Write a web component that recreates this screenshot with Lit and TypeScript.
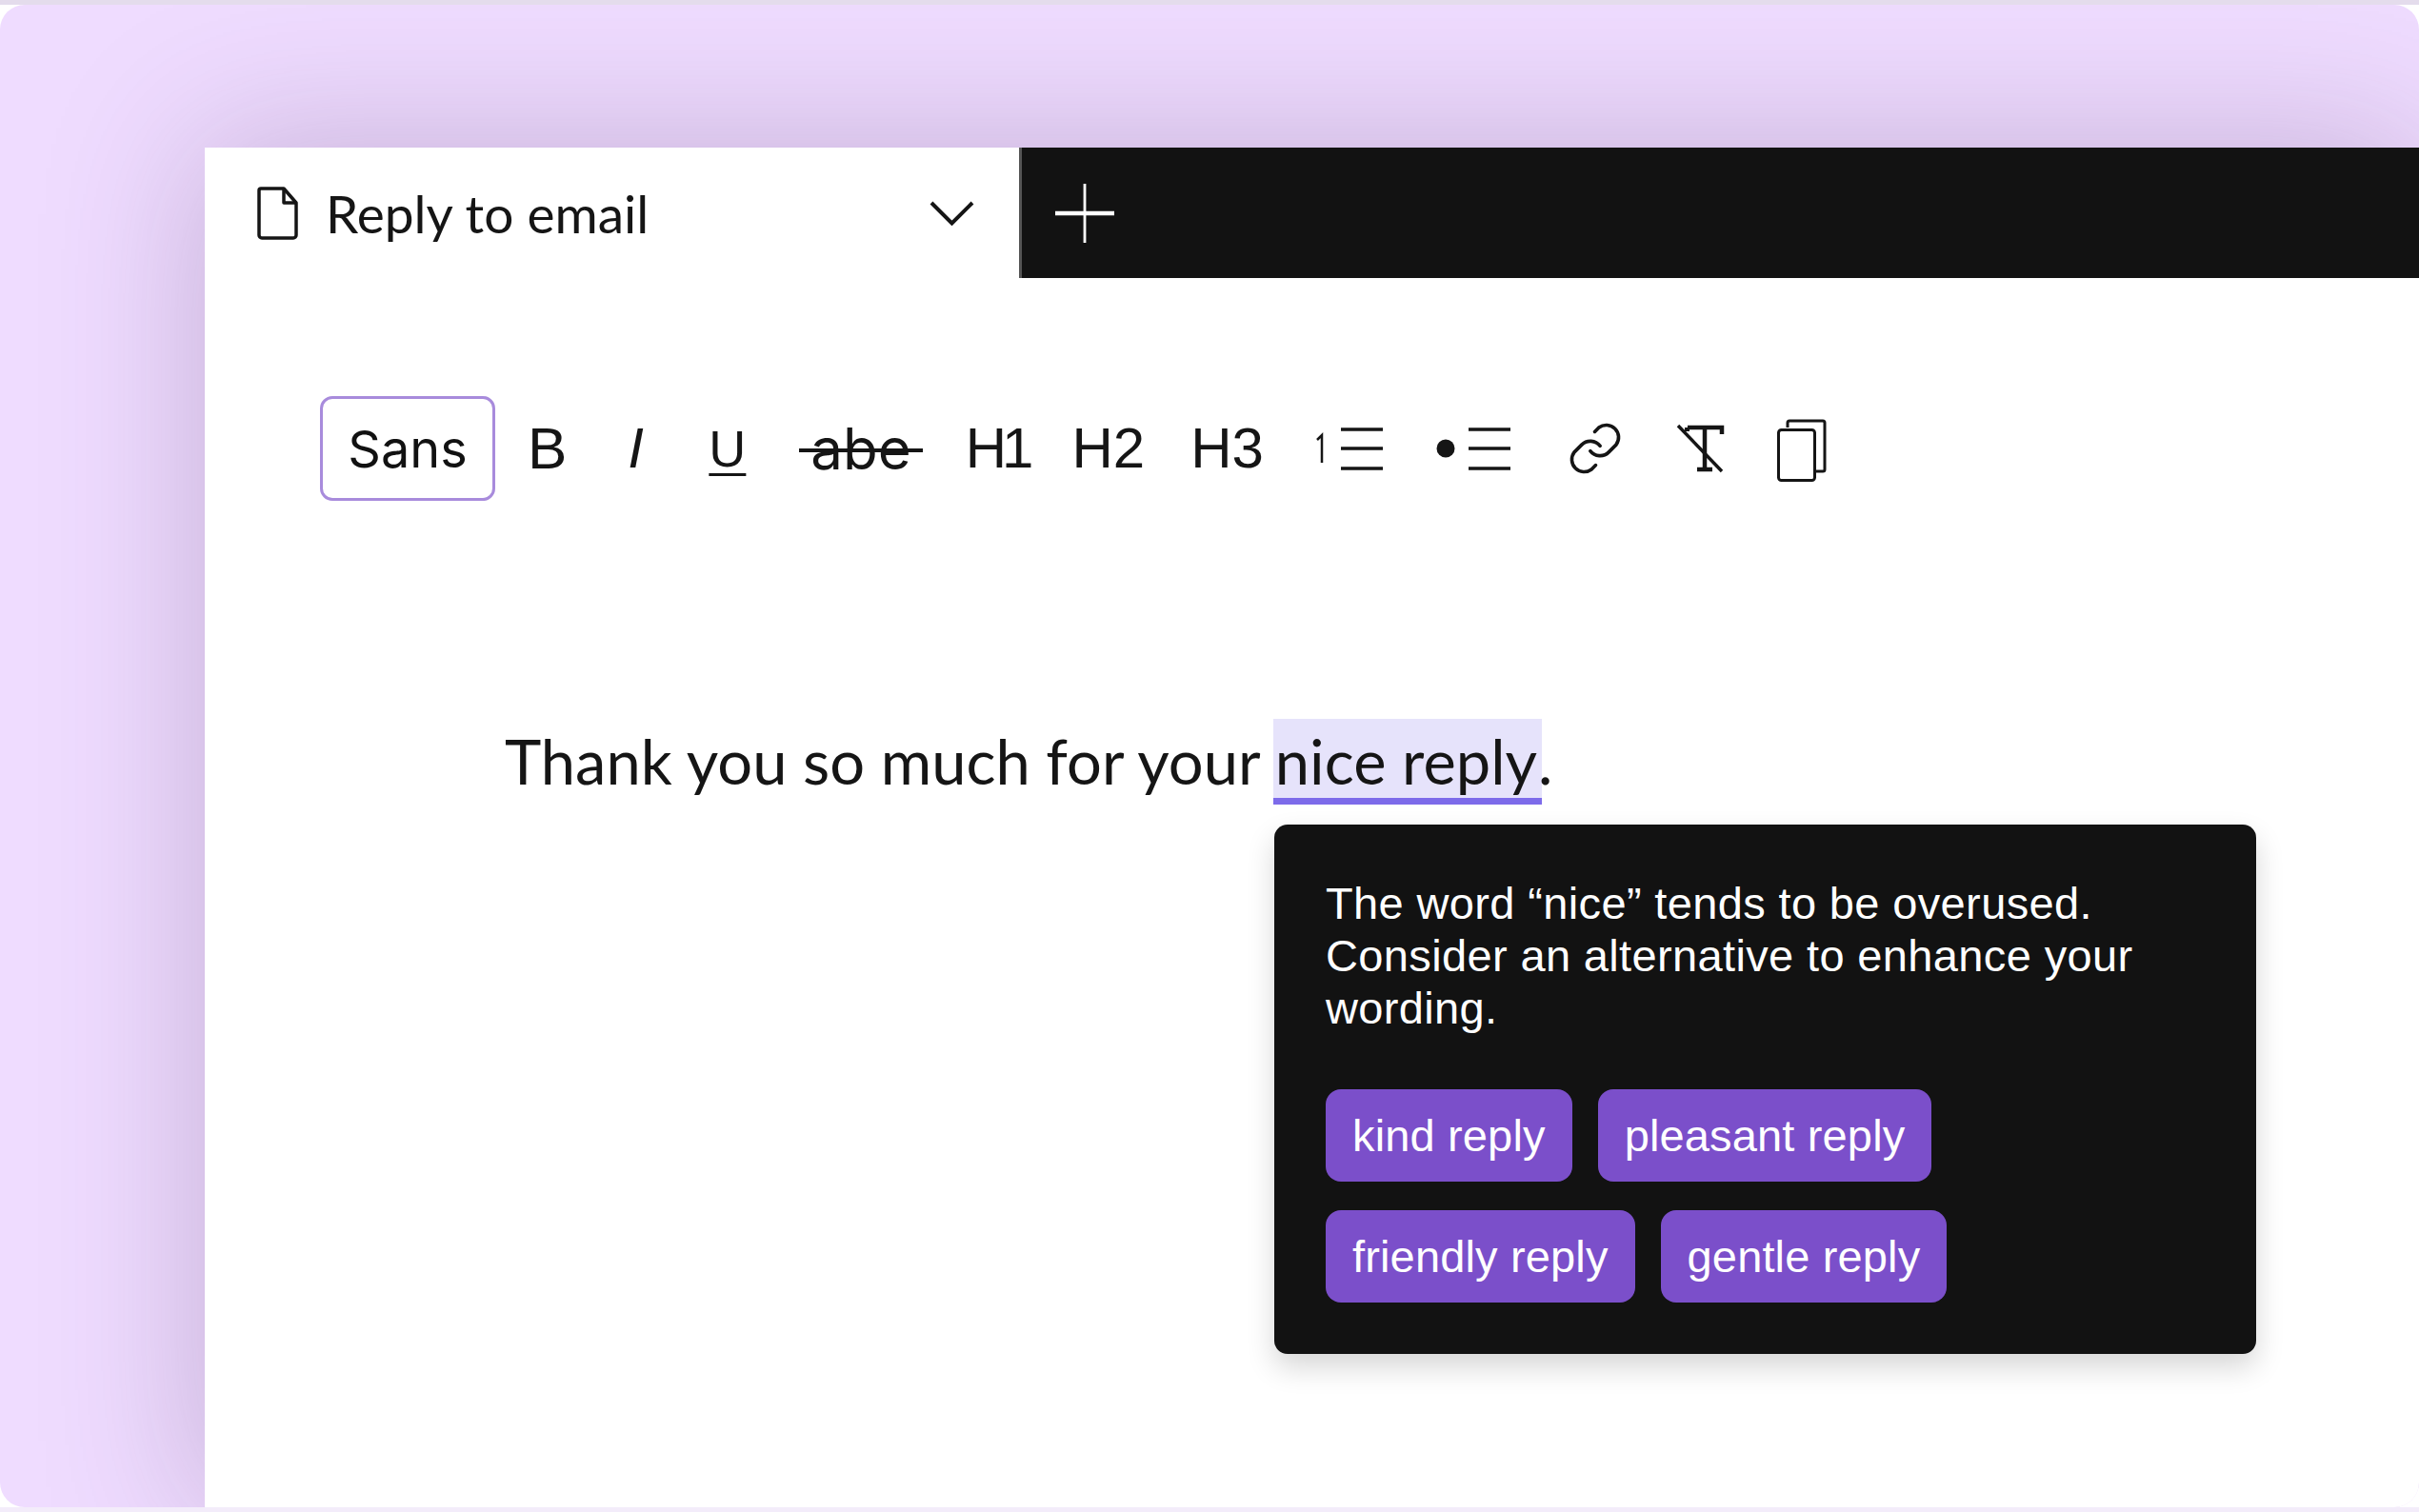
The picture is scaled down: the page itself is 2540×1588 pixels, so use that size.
import { LitElement, html, css } from "lit";
import { customElement } from "lit/decorators.js";

@customElement("app-root")
export class AppRoot extends LitElement {
  static styles = css`
    :host { display: block; width: 2540px; height: 1588px; background: #fff; overflow: hidden; font-family: "Liberation Sans", Arial, sans-serif; color: #111; }
    .strip-top { height: 5px; background: #e4dcec; }
    .strip-bottom { height: 5px; background: #f3ecfa; }
    .card { height: 1578px; box-sizing: border-box; padding: 150px 0 0 215px; background: #efdcff; border-radius: 26px; overflow: hidden; }
    .window { height: 100%; background: #fff; box-shadow: 0 0 150px 4px rgba(80, 50, 100, 0.26); display: flex; flex-direction: column; position: relative; }
    .tabs { height: 137px; flex: none; display: flex; background: #121212; }
    .tab { width: 855px; background: #fff; border-right: 3px solid #555; display: flex; align-items: center; box-sizing: content-box; }
    .doc { width: 44px; height: 56px; margin-left: 55px; flex: none; }
    .tab-title { font-family: Lato, sans-serif; font-size: 55px; margin-left: 28px; color: #151515; flex: 1; }
    .chev { width: 47px; height: 26px; margin-right: 47px; flex: none; }
    .plus { width: 62px; height: 62px; margin: 38px 0 0 35px; flex: none; }
    .toolbar { display: flex; align-items: center; gap: 56px; margin: 124px 0 0 121px; height: 110px; }
    .font { width: 184px; height: 110px; box-sizing: border-box; border: 3px solid #a88bdc; border-radius: 13px; display: flex; align-items: center; justify-content: center; font-family: Inter, sans-serif; font-size: 54px; margin-right: -22px; }
    .t { font-size: 60px; line-height: 60px; color: #151515; font-family: "Liberation Sans", sans-serif; }
    .b { font-size: 62px; margin-right: 8px; }
    .i { font-style: italic; margin-right: 13px; width: 16px; }
    .u { text-decoration: underline; text-underline-offset: 7px; text-decoration-thickness: 3px; font-size: 54px; }
    .s { position: relative; font-family: Inter, sans-serif; padding: 0 12px; margin-right: -11px; }
    .s::after { content: ""; position: absolute; left: 0; right: 0; top: 30px; height: 4px; background: #151515; }
    .h1 { letter-spacing: -5px; margin-right: -11px; }
    .h2 { margin-right: -8px; }
    .h3 { margin-right: -2px; }
    svg.ic { flex: none; display: block; overflow: visible; }
    .link { margin: 0 -2px 0 2px; }
    .copy { margin-top: 3px; }
    .doc-body { margin: 229px 0 0 315px; font-family: Lato, sans-serif; font-size: 65px; line-height: 88px; color: #151515; white-space: nowrap; }
    .mark { display: inline-block; background: #e6e3fb; box-shadow: inset 0 -7px 0 #7d6bea; padding: 0 5px 2px 2px; margin: 0 -4px 0 -2px; }
    .tip { position: absolute; left: 1123px; top: 711px; width: 1031px; height: 556px; box-sizing: border-box; padding: 55px 54px 54px; background: #121212; border-radius: 14px; box-shadow: 0 14px 30px rgba(0, 0, 0, 0.16); color: #fff; }
    .tip p { margin: 0; font-size: 47px; line-height: 55px; letter-spacing: 0.36px; }
    .opts { display: flex; flex-wrap: wrap; gap: 30px 27px; margin-top: 58px; }
    .opt { height: 97px; padding: 0 28px; background: #7b4fca; border-radius: 16px; font-size: 47px; line-height: 97px; letter-spacing: 0.15px; color: #fff; }
  `;

  render() {
    return html`
      <div class="strip-top"></div>
      <div class="card">
        <div class="window">
          <div class="tabs">
            <div class="tab">
              <svg class="doc" viewBox="0 0 44 56" fill="none" stroke="#151515" stroke-width="3.5" stroke-linejoin="round"><path d="M4 2h24l13 15v34a3 3 0 0 1-3 3H5a3 3 0 0 1-3-3V4a2 2 0 0 1 2-2z"/><path d="M28 2v15h13"/></svg>
              <div class="tab-title">Reply to email</div>
              <svg class="chev" viewBox="0 0 47 26" fill="none" stroke="#151515" stroke-width="4"><path d="M2 2l21.500 21.500L45 2"/></svg>
            </div>
            <svg class="plus" viewBox="0 0 66 66" stroke="#fff" fill="none"><path d="M0 33h66" stroke-width="5"/><path d="M33 0v66" stroke-width="3"/></svg>
          </div>
          <div class="toolbar">
            <div class="font">Sans</div>
            <div class="t b">B</div>
            <div class="t i">I</div>
            <div class="t u">U</div>
            <div class="t s">abe</div>
            <div class="t h1">H1</div>
            <div class="t h2">H2</div>
            <div class="t h3">H3</div>
            <svg class="ic" width="71" height="46" viewBox="0 0 71 46" fill="none" stroke="#151515"><path d="M2 14l5-5v29" stroke-width="2.500"/><path d="M27 3h44M27 23h44M27 44h44" stroke-width="3.500"/></svg>
            <svg class="ic" width="78" height="46" viewBox="0 0 78 46" fill="none" stroke="#151515"><ellipse cx="10" cy="23" rx="9.500" ry="9.500" fill="#151515" stroke="none"/><path d="M34 3h44M34 23h44M34 44h44" stroke-width="3.500"/></svg>
            <svg class="ic link" width="62" height="62" viewBox="0 0 24 24" fill="none" stroke="#151515" stroke-width="1.400" stroke-linecap="round" stroke-linejoin="round"><path d="M10 13a5 5 0 0 0 7.500.500l3-3a5 5 0 0 0-7-7l-1.700 1.700"/><path d="M14 11a5 5 0 0 0-7.500-.500l-3 3a5 5 0 0 0 7 7l1.700-1.700"/></svg>
            <svg class="ic" width="50" height="50" viewBox="0 0 50 50" fill="none" stroke="#151515"><path d="M12 3h36v7M30 3v44M22 47h16" stroke-width="4.500"/><path d="M9 5h5" stroke-width="4"/><path d="M2 1l46 48" stroke-width="3.500"/></svg>
            <svg class="ic copy" width="52" height="66" viewBox="0 0 52 66" fill="none" stroke="#151515" stroke-width="3"><path d="M11 9V4a2 2 0 0 1 2-2h35a2 2 0 0 1 2 2v49a2 2 0 0 1-2 2h-8"/><rect x="1.500" y="11.500" width="38" height="53" rx="3" fill="#fff"/></svg>
          </div>
          <div class="doc-body">Thank you so much for your <span class="mark">nice reply</span>.</div>
          <div class="tip">
            <p>The word “nice” tends to be overused.<br />Consider an alternative to enhance your<br />wording.</p>
            <div class="opts">
              <div class="opt">kind reply</div>
              <div class="opt">pleasant reply</div>
              <div class="opt">friendly reply</div>
              <div class="opt">gentle reply</div>
            </div>
          </div>
        </div>
      </div>
      <div class="strip-bottom"></div>
    `;
  }
}
